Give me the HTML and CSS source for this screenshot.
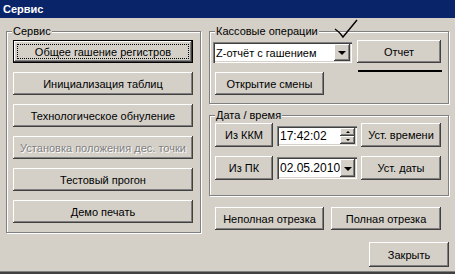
FILE: index.html
```html
<!DOCTYPE html>
<html lang="ru">
<head>
<meta charset="utf-8">
<title>Сервис</title>
<link rel="stylesheet" href="styles.css">
</head>
<body>
<div class="window">
  <div class="titlebar">Сервис</div>
  <div class="content">
    <div class="group group-service">
      <span class="legend">Сервис</span>
      <button class="btn btn-default">Общее гашение регистров</button>
      <button class="btn">Инициализация таблиц</button>
      <button class="btn">Технологическое обнуление</button>
      <button class="btn disabled">Установка положения дес. точки</button>
      <button class="btn">Тестовый прогон</button>
      <button class="btn">Демо печать</button>
    </div>
    <div class="right">
      <div class="group group-kassa">
        <span class="legend">Кассовые операции</span>
        <svg class="check" width="28" height="22" viewBox="0 0 28 22"><path d="M1 10 C4 12 7 15 9 18 L23 1" fill="none" stroke="#000" stroke-width="1.4"/></svg>
        <div class="row row-report">
          <div class="combo">
            <span class="combo-text">Z-отчёт с гашением</span>
            <span class="drop"><i class="tri"></i></span>
          </div>
          <button class="btn btn-report">Отчет</button>
        </div>
        <span class="underline"></span>
        <button class="btn btn-open">Открытие смены</button>
      </div>
      <div class="group group-date">
        <span class="legend">Дата / время</span>
        <div class="row row-date">
          <button class="btn btn-src">Из ККМ</button>
          <div class="field field-time">
            <span class="field-text">17:42:02</span>
            <span class="spin">
              <span class="spin-btn"><i class="tri-up"></i></span>
              <span class="spin-btn"><i class="tri-small"></i></span>
            </span>
          </div>
          <button class="btn btn-set">Уст. времени</button>
        </div>
        <div class="row row-date">
          <button class="btn btn-src">Из ПК</button>
          <div class="field field-date">
            <span class="field-text">02.05.2010</span>
            <span class="drop drop-date"><i class="tri"></i></span>
          </div>
          <button class="btn btn-set">Уст. даты</button>
        </div>
      </div>
      <div class="row row-cut">
        <button class="btn btn-cut1">Неполная отрезка</button>
        <button class="btn btn-cut2">Полная отрезка</button>
      </div>
      <div class="row row-close">
        <button class="btn btn-close">Закрыть</button>
      </div>
    </div>
  </div>
  <div class="bottom-edge"></div>
</div>
</body>
</html>
```

FILE: styles.css
```css
* { box-sizing: border-box; }
html, body { margin: 0; padding: 0; background: #d4d0c8; }
.window {
  width: 455px;
  height: 274px;
  background: #d4d0c8;
  display: flex;
  flex-direction: column;
  font-family: "Liberation Sans", Arial, sans-serif;
  font-size: 11px;
  color: #000;
  overflow: hidden;
}
.titlebar {
  height: 18px;
  background: #0a246a;
  color: #fff;
  font-weight: bold;
  font-size: 11px;
  line-height: 18px;
  padding-left: 3px;
}
.content {
  flex: 1;
  display: flex;
  gap: 8px;
  padding: 13px 6px 0 6px;
}
.bottom-edge {
  height: 3px;
  background: #404040;
  border-top: 1px solid #808080;
}
.group {
  position: relative;
  border: 1px solid #808080;
  box-shadow: inset 1px 1px 0 #fff, 1px 1px 0 #fff;
}
.legend {
  position: absolute;
  top: -7px;
  left: 5px;
  padding: 0 1px;
  line-height: 13px;
  background: #d4d0c8;
  white-space: nowrap;
}
.group-service {
  width: 195px;
  height: 202px;
  padding: 8px 0 0 6px;
  display: flex;
  flex-direction: column;
  gap: 9px;
}
.btn {
  font: inherit;
  color: #000;
  background: #d4d0c8;
  border: 0;
  padding: 0;
  margin: 0;
  height: 23px;
  box-shadow: inset -1px -1px 0 #404040, inset 1px 1px 0 #fff, inset -2px -2px 0 #808080;
  white-space: nowrap;
}
.group-service .btn { width: 180px; }
.btn-default {
  border: 1px solid #000;
  outline: 1px dotted #000;
  outline-offset: -5px;
}
.disabled {
  color: #808080;
  text-shadow: 1px 1px 0 #fff;
}
.right {
  width: 240px;
  display: flex;
  flex-direction: column;
}
.group-kassa {
  height: 73px;
  padding: 8px 0 0 3px;
}
.check {
  position: absolute;
  left: 124px;
  top: -13px;
}
.row { display: flex; }
.row-report { gap: 5px; align-items: flex-start; }
.combo {
  margin-top: 2px;
  width: 139px;
  height: 21px;
  background: #fff;
  display: flex;
  align-items: center;
  justify-content: space-between;
  padding: 2px;
  box-shadow: inset 1px 1px 0 #808080, inset 2px 2px 0 #404040, inset -1px -1px 0 #fff, inset -2px -2px 0 #d4d0c8;
}
.combo-text { padding-left: 1px; }
.drop {
  width: 16px;
  height: 17px;
  background: #d4d0c8;
  box-shadow: inset -1px -1px 0 #404040, inset 1px 1px 0 #fff, inset -2px -2px 0 #808080;
  display: flex;
  align-items: center;
  justify-content: center;
}
.tri {
  width: 0;
  height: 0;
  border-left: 4px solid transparent;
  border-right: 4px solid transparent;
  border-top: 4px solid #000;
  margin-top: 1px;
}
.btn-report { width: 84px; }
.underline {
  position: absolute;
  left: 148px;
  top: 38px;
  width: 84px;
  height: 2px;
  background: #000;
}
.btn-open {
  display: block;
  width: 109px;
  margin: 9px 0 0 2px;
}
.group-date {
  margin-top: 11px;
  height: 81px;
  padding: 7px 0 0 5px;
  display: flex;
  flex-direction: column;
  gap: 9px;
}
.row-date { gap: 4px; align-items: flex-start; }
.row-date .btn { height: 24px; }
.btn-src { width: 58px; }
.btn-set { width: 80px; }
.field {
  width: 80px;
  background: #fff;
  display: flex;
  align-items: center;
  justify-content: space-between;
  padding: 2px;
  box-shadow: inset 1px 1px 0 #808080, inset 2px 2px 0 #404040, inset -1px -1px 0 #fff, inset -2px -2px 0 #d4d0c8;
}
.field-time { height: 20px; margin-top: 3px; }
.field-date { height: 22px; margin-top: 1px; }
.field-text { padding-left: 1px; font-size: 12px; }
.spin {
  display: flex;
  flex-direction: column;
  width: 15px;
  height: 16px;
}
.spin-btn {
  flex: 1;
  background: #d4d0c8;
  box-shadow: inset -1px -1px 0 #404040, inset 1px 1px 0 #fff, inset -2px -2px 0 #808080;
  display: flex;
  align-items: center;
  justify-content: center;
}
.tri-up {
  width: 0;
  height: 0;
  border-left: 2px solid transparent;
  border-right: 2px solid transparent;
  border-bottom: 2px solid #000;
}
.tri-small {
  width: 0;
  height: 0;
  border-left: 2px solid transparent;
  border-right: 2px solid transparent;
  border-top: 2px solid #000;
}
.drop-date { height: 18px; width: 15px; }
.row-cut {
  margin-top: 11px;
  padding-left: 6px;
  gap: 7px;
}
.btn-cut1 { width: 109px; }
.btn-cut2 { width: 110px; }
.row-close {
  margin-top: 12px;
  justify-content: flex-end;
}
.btn-close { width: 80px; height: 25px; }
```
